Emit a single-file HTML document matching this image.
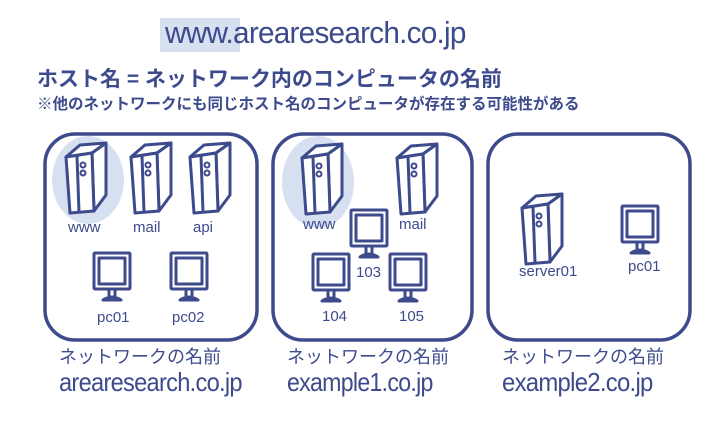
<!DOCTYPE html>
<html><head><meta charset="utf-8"><style>
body{margin:0;width:722px;height:432px;background:#fff;overflow:hidden;font-family:"Liberation Sans","Noto Sans CJK JP",sans-serif;color:#3d4b8c}
svg{position:absolute;left:0;top:0}
.t{position:absolute;white-space:nowrap;transform-origin:left}
</style></head><body>
<svg width="722" height="432" viewBox="0 0 722 432">
<defs>
<g id="srv" fill="#fff" stroke="#3d4b8c" stroke-width="3" stroke-linejoin="round">
<path d="M0 14 L14 2 L40 0 L26 10 Z"/>
<path d="M26 10 L40 0 L40 52 L28 68 Z"/>
<path d="M0 14 L26 10 L28 68 L4 70 Z"/>
<path d="M11 13 L13 69" fill="none"/>
<circle cx="17" cy="22" r="2.5" stroke-width="2"/>
<circle cx="17" cy="30" r="2.5" stroke-width="2"/>
</g>
<g id="mon" fill="#fff" stroke="#3d4b8c" stroke-width="3" stroke-linejoin="round">
<rect x="1" y="1" width="36" height="36" rx="1"/>
<rect x="6" y="6" width="26" height="26"/>
<path d="M16 37 L16 44 M22 37 L22 44" fill="none"/>
<path d="M10 48 Q19 42 28 48 Z"/>
</g>
</defs>
<rect x="160" y="18" width="80" height="34" fill="#d6e0f0"/>
<g fill="none" stroke="#3d4b8c" stroke-width="3.5">
<rect x="45" y="134" width="212" height="206" rx="30"/>
<rect x="273" y="134" width="199" height="206" rx="30"/>
<rect x="488" y="134" width="202" height="206" rx="30"/>
</g>
<ellipse cx="88" cy="180" rx="36" ry="44" fill="#d6e0f0"/>
<ellipse cx="318" cy="182" rx="36" ry="46" fill="#d6e0f0"/>
<use href="#srv" x="66" y="143"/>
<use href="#srv" x="131" y="143"/>
<use href="#srv" x="190" y="143"/>
<use href="#srv" x="302" y="144"/>
<use href="#srv" x="397" y="144"/>
<use href="#srv" x="522" y="194"/>
<use href="#mon" x="93" y="252"/>
<use href="#mon" x="170" y="252"/>
<use href="#mon" x="350" y="209"/>
<use href="#mon" x="312" y="253"/>
<use href="#mon" x="389" y="253"/>
<use href="#mon" x="621" y="205"/>
<g fill="#3d4b8c" font-family="Liberation Sans Narrow,Liberation Sans,sans-serif" font-size="15">
<text x="68" y="232">www</text><text x="133" y="232">mail</text><text x="193" y="232">api</text>
<text x="97" y="322">pc01</text><text x="172" y="322">pc02</text>
<text x="303" y="229">www</text><text x="399" y="229">mail</text>
<text x="356" y="277">103</text><text x="322" y="321">104</text><text x="399" y="321">105</text>
<text x="519" y="276">server01</text><text x="628" y="271">pc01</text>
</g>
</svg>
<div class="t" style="left:165px;top:15px;font-size:31px;letter-spacing:-0.8px;transform:scaleX(0.96)">www.arearesearch.co.jp</div>
<div class="t" style="left:37px;top:63px;font-size:21px;font-weight:bold">ホスト名 = ネットワーク内のコンピュータの名前</div>
<div class="t" style="left:37px;top:92px;font-size:15.5px;font-weight:bold">※他のネットワークにも同じホスト名のコンピュータが存在する可能性がある</div>
<div class="t" style="left:59px;top:343px;font-size:18px">ネットワークの名前</div>
<div class="t" style="left:287px;top:343px;font-size:18px">ネットワークの名前</div>
<div class="t" style="left:502px;top:343px;font-size:18px">ネットワークの名前</div>
<div class="t" style="left:59px;top:367px;font-size:26px;letter-spacing:-0.8px;transform:scaleX(0.91)">arearesearch.co.jp</div>
<div class="t" style="left:287px;top:367px;font-size:26px;letter-spacing:-0.8px;transform:scaleX(0.89)">example1.co.jp</div>
<div class="t" style="left:502px;top:367px;font-size:26px;letter-spacing:-0.8px;transform:scaleX(0.92)">example2.co.jp</div>
</body></html>
